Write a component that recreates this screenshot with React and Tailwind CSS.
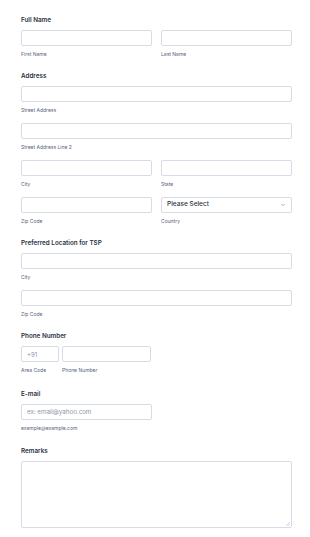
import { ChevronDown } from "lucide-react";

const Heading = ({ children }) => (
  <div className="text-[6.3px] leading-[10px] font-semibold text-[#2c3345] mb-[5px]">
    {children}
  </div>
);

const Sub = ({ children }) => (
  <div className="mt-[5px] text-[5px] leading-[6px] text-[#57647e]">{children}</div>
);

const Box = ({ className = "", children }) => (
  <div
    className={
      "h-[16px] border border-[#d8dbe6] rounded-[2px] bg-white flex items-center px-[5px] " +
      className
    }
  >
    {children}
  </div>
);

const Field = ({ label, className = "", children }) => (
  <div className={className}>
    <Box>{children}</Box>
    <Sub>{label}</Sub>
  </div>
);

const App = () => {
  return (
    <div
      className="w-[310px] min-h-[537px] bg-white pl-[21px] pr-[18px] pt-[15px]"
      style={{ fontFamily: "Inter, 'Noto Sans', sans-serif" }}
    >
      {/* Full Name */}
      <Heading>Full Name</Heading>
      <div className="grid grid-cols-2 gap-[9px]">
        <Field label="First Name" />
        <Field label="Last Name" />
      </div>

      {/* Address */}
      <div className="mt-[14px]">
        <Heading>Address</Heading>
        <Field label="Street Address" />
        <Field label="Street Address Line 2" className="mt-[10px]" />
        <div className="grid grid-cols-2 gap-[9px] mt-[10px]">
          <Field label="City" />
          <Field label="State" />
        </div>
        <div className="grid grid-cols-2 gap-[9px] mt-[10px]">
          <Field label="Zip Code" />
          <div>
            <Box className="justify-between">
              <span className="text-[6.5px] font-medium text-[#2c3345]">Please Select</span>
              <ChevronDown className="w-[6px] h-[6px] text-[#57647e]" strokeWidth={2} />
            </Box>
            <Sub>Country</Sub>
          </div>
        </div>
      </div>

      {/* Preferred Location */}
      <div className="mt-[14px]">
        <Heading>Preferred Location for TSP</Heading>
        <Field label="City" />
        <Field label="Zip Code" className="mt-[10px]" />
      </div>

      {/* Phone */}
      <div className="mt-[14px]">
        <Heading>Phone Number</Heading>
        <div className="flex gap-[3px]">
          <Field label="Area Code" className="w-[38px]">
            <span className="text-[6px] text-[#8c94a7]">+91</span>
          </Field>
          <Field label="Phone Number" className="w-[89px]" />
        </div>
      </div>

      {/* Email */}
      <div className="mt-[16px]">
        <Heading>E-mail</Heading>
        <Field label="example@example.com" className="w-[131px]">
          <span className="text-[6.2px] text-[#8c94a7]">ex: email@yahoo.com</span>
        </Field>
      </div>

      {/* Remarks */}
      <div className="mt-[15px]">
        <Heading>Remarks</Heading>
        <div className="relative h-[67px] border border-[#d8dbe6] rounded-[2px]">
          <svg
            className="absolute right-[1px] bottom-[1px] w-[4px] h-[4px]"
            viewBox="0 0 4 4"
          >
            <path d="M4 0 L0 4 M4 2 L2 4" stroke="#b8bccb" strokeWidth="0.6" />
          </svg>
        </div>
      </div>
    </div>
  );
};

export default App;
